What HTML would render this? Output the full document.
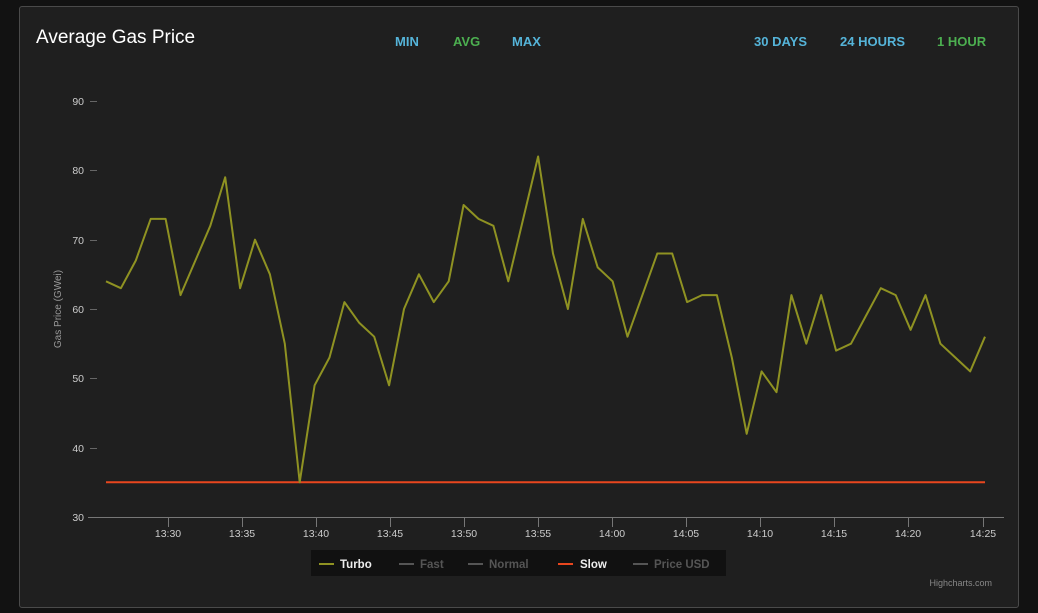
<!DOCTYPE html>
<html><head><meta charset="utf-8"><style>
html,body{margin:0;padding:0;background:#121212;width:1038px;height:613px;overflow:hidden;font-family:"Liberation Sans",sans-serif}
.card{position:absolute;left:19px;top:6px;width:998px;height:600px;background:#1f1f1f;border:1px solid #4a4a4a;border-radius:3px}
.t{position:absolute;left:36px;top:27px;color:#fff;font-size:19px}
.b{position:absolute;top:34px;font-size:13px;font-weight:bold;color:#55b4d9}
.g{color:#4caf50}
svg{position:absolute;left:0;top:0}
</style></head><body>
<div class="card"></div>
<div class="t">Average Gas Price</div>
<div class="b" style="left:395px">MIN</div>
<div class="b g" style="left:453px">AVG</div>
<div class="b" style="left:512px">MAX</div>
<div class="b" style="left:754px">30 DAYS</div>
<div class="b" style="left:840px">24 HOURS</div>
<div class="b g" style="left:937px">1 HOUR</div>
<svg width="1038" height="613" font-family="Liberation Sans, sans-serif">
<g fill="#ccc" font-size="10.5" text-anchor="end">
<text x="84" y="105">90</text><text x="84" y="174">80</text><text x="84" y="244">70</text><text x="84" y="313">60</text><text x="84" y="382">50</text><text x="84" y="452">40</text><text x="84" y="521">30</text>
</g>
<g stroke="#666" stroke-width="1">
<line x1="90" y1="101.5" x2="97" y2="101.5"/><line x1="90" y1="170.5" x2="97" y2="170.5"/><line x1="90" y1="240.5" x2="97" y2="240.5"/><line x1="90" y1="309.5" x2="97" y2="309.5"/><line x1="90" y1="378.5" x2="97" y2="378.5"/><line x1="90" y1="448.5" x2="97" y2="448.5"/>
<line x1="88" y1="517.5" x2="1004" y2="517.5" stroke="#777"/>
</g>
<g stroke="#777">
<line x1="168.5" y1="518" x2="168.5" y2="527"/><line x1="242.5" y1="518" x2="242.5" y2="527"/><line x1="316.5" y1="518" x2="316.5" y2="527"/><line x1="390.5" y1="518" x2="390.5" y2="527"/><line x1="464.5" y1="518" x2="464.5" y2="527"/><line x1="538.5" y1="518" x2="538.5" y2="527"/><line x1="612.5" y1="518" x2="612.5" y2="527"/><line x1="686.5" y1="518" x2="686.5" y2="527"/><line x1="760.5" y1="518" x2="760.5" y2="527"/><line x1="834.5" y1="518" x2="834.5" y2="527"/><line x1="908.5" y1="518" x2="908.5" y2="527"/><line x1="983.5" y1="518" x2="983.5" y2="527"/>
</g>
<g fill="#ccc" font-size="10.5" text-anchor="middle">
<text x="168" y="537">13:30</text><text x="242" y="537">13:35</text><text x="316" y="537">13:40</text><text x="390" y="537">13:45</text><text x="464" y="537">13:50</text><text x="538" y="537">13:55</text><text x="612" y="537">14:00</text><text x="686" y="537">14:05</text><text x="760" y="537">14:10</text><text x="834" y="537">14:15</text><text x="908" y="537">14:20</text><text x="983" y="537">14:25</text>
</g>
<text x="61" y="309" fill="#999" font-size="10" text-anchor="middle" transform="rotate(-90 61 309)">Gas Price (GWei)</text>
<line x1="106" y1="482.3" x2="985" y2="482.3" stroke="#e8461e" stroke-width="2"/>
<polyline fill="none" stroke="#8f9222" stroke-width="2" stroke-linejoin="round" points="106,281.3 120.9,288.2 135.8,260.5 150.7,218.9 165.6,218.9 180.5,295.1 195.4,260.5 210.3,225.8 225.2,177.3 240.1,288.2 255,239.7 269.9,274.3 284.8,343.7 299.7,482.3 314.6,385.3 329.5,357.5 344.4,302.1 359.3,322.9 374.2,336.7 389.1,385.3 404,309 418.9,274.3 433.8,302.1 448.7,281.3 463.6,205 478.5,218.9 493.4,225.8 508.3,281.3 523.2,218.9 538.1,156.5 553,253.5 567.9,309 582.8,218.9 597.7,267.4 612.6,281.3 627.5,336.7 642.4,295.1 657.3,253.5 672.2,253.5 687.1,302.1 702,295.1 716.9,295.1 731.8,357.5 746.7,433.8 761.6,371.4 776.5,392.2 791.4,295.1 806.3,343.7 821.2,295.1 836.1,350.6 851,343.7 865.9,315.9 880.8,288.2 895.7,295.1 910.6,329.8 925.5,295.1 940.4,343.7 955.3,357.5 970.2,371.4 985,336.7"/>
<rect x="311" y="550" width="415" height="26" fill="#111"/>
<g font-size="11.5" font-weight="bold">
<line x1="319" y1="564" x2="334" y2="564" stroke="#8f9222" stroke-width="2"/><text x="340" y="568" fill="#eee">Turbo</text>
<line x1="399" y1="564" x2="414" y2="564" stroke="#555" stroke-width="2"/><text x="420" y="568" fill="#555">Fast</text>
<line x1="468" y1="564" x2="483" y2="564" stroke="#555" stroke-width="2"/><text x="489" y="568" fill="#555">Normal</text>
<line x1="558" y1="564" x2="573" y2="564" stroke="#e8461e" stroke-width="2"/><text x="580" y="568" fill="#eee">Slow</text>
<line x1="633" y1="564" x2="648" y2="564" stroke="#555" stroke-width="2"/><text x="654" y="568" fill="#555">Price USD</text>
</g>
<text x="992" y="586" fill="#888" font-size="9" text-anchor="end">Highcharts.com</text>
</svg>
</body></html>
